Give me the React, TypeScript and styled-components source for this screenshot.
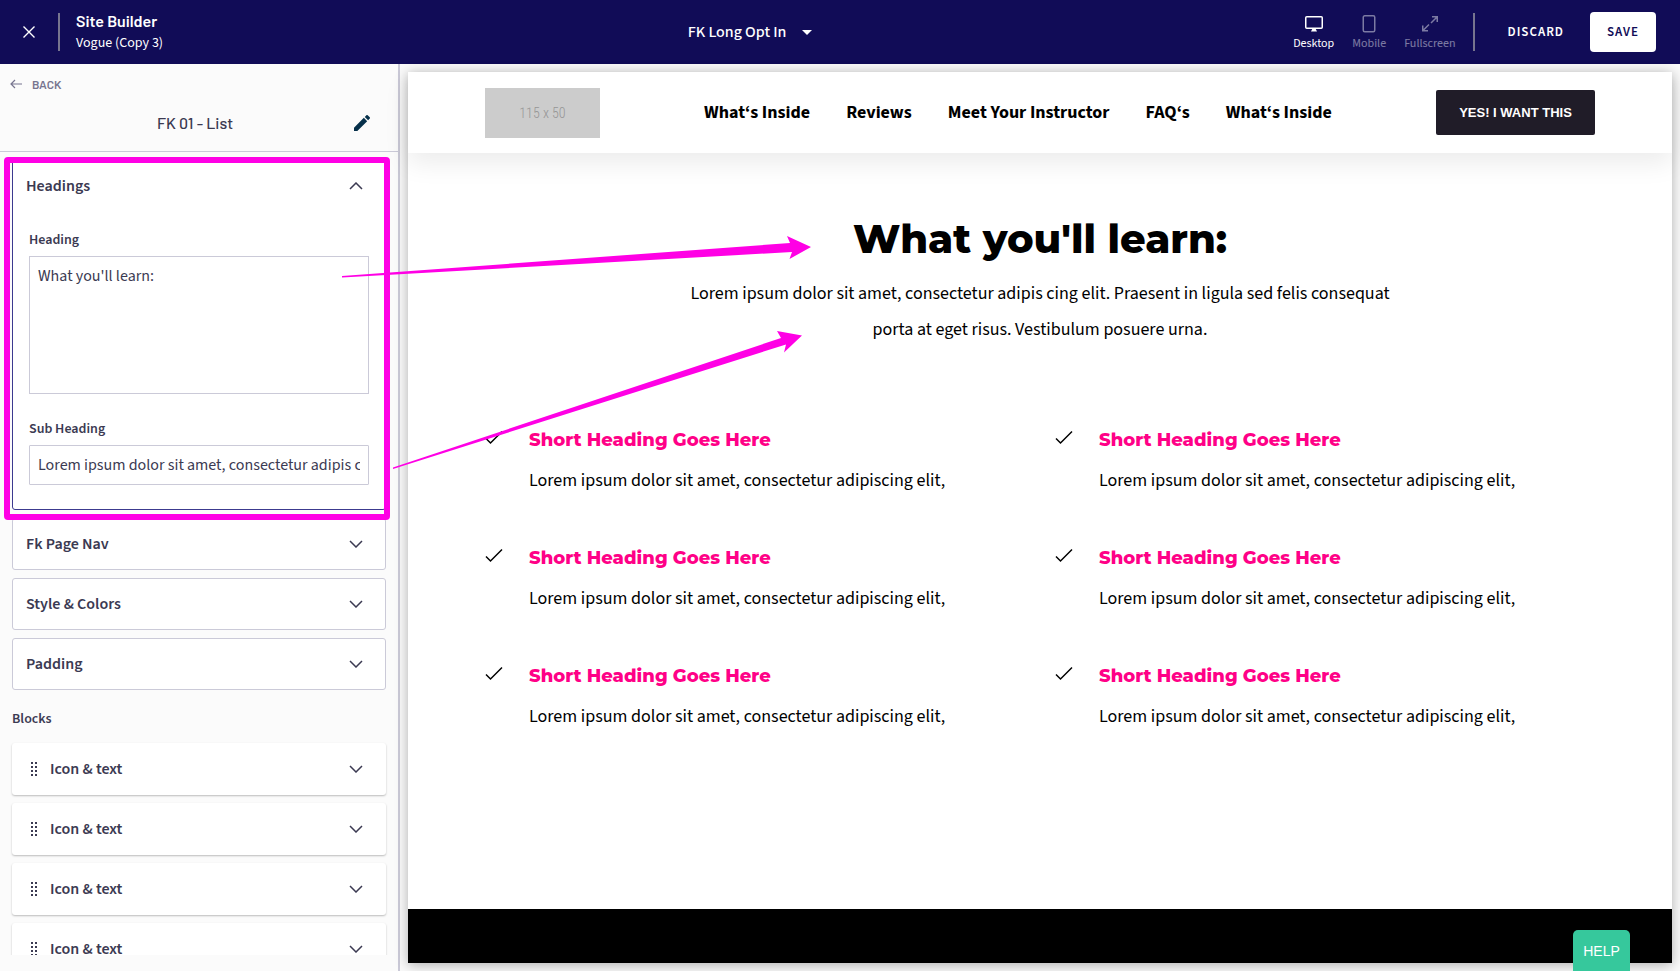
import React from "react";
import styled, { createGlobalStyle } from "styled-components";

const sans = `"Source Sans 3", "Source Sans Pro", "Noto Sans CJK SC", sans-serif`;
const display = `Barlow, Roboto, sans-serif`;
const heading = `Montserrat, Inter, sans-serif`;

const GlobalStyle = createGlobalStyle`
  *, *::before, *::after { box-sizing: border-box; }
  body { margin: 0; background: #fafafa; color: #3b3a52; font-family: ${sans}; }
  h1, h2, h3, p, ul { margin: 0; padding: 0; }
  ul { list-style: none; }
  button { font: inherit; color: inherit; background: none; border: 0; padding: 0; cursor: pointer; }
  svg { display: block; flex: none; }
`;

const Page = styled.div`
  position: relative;
  display: flex;
  flex-direction: column;
  height: 100vh;
  overflow: hidden;
`;

const TopBar = styled.header`
  display: flex;
  align-items: center;
  justify-content: space-between;
  flex: none;
  height: 64px;
  padding: 0 24px 0 20px;
  background: #110c57;
  color: #fff;
`;

const TopGroup = styled.div`
  display: flex;
  align-items: center;
  min-width: 205px;
`;

const IconButton = styled.button`
  display: flex;
  align-items: center;
  justify-content: center;
  width: 18px;
  height: 24px;
`;

const Divider = styled.span<{ $before: number }>`
  width: 2px;
  height: 38px;
  margin: 0 16px 0 ${(p) => p.$before}px;
  background: #77758f;
`;

const Brand = styled.h1`
  font: 600 16px/22px ${display};
`;

const SiteName = styled.p`
  font-size: 14px;
  line-height: 22px;
`;

const PagePicker = styled.button`
  display: flex;
  align-items: center;
  gap: 16px;
  font-size: 16px;
  font-weight: 500;
  line-height: 24px;
`;

const ViewButton = styled.button<{ $active?: boolean }>`
  display: flex;
  flex-direction: column;
  align-items: center;
  gap: 2px;
  padding-top: 2px;
  margin-left: 18px;
  font-size: 12px;
  line-height: 16px;
  opacity: ${(p) => (p.$active ? 1 : 0.45)};
`;

const Discard = styled.button`
  margin: 0 26px 0 17px;
  font-size: 13px;
  font-weight: 600;
  letter-spacing: 1px;
`;

const Save = styled(Discard)`
  width: 66px;
  height: 40px;
  margin: 0;
  border-radius: 4px;
  background: #fff;
  color: #110c57;
`;

const Workspace = styled.div`
  display: flex;
  flex: 1;
  min-height: 0;
`;

const Sidebar = styled.aside`
  display: flex;
  flex-direction: column;
  flex: none;
  width: 400px;
  padding-bottom: 16px;
  border-right: 2px solid #cbcad8;
  background: #fbfbfb;
`;

const SidebarHead = styled.div`
  flex: none;
  height: 88px;
  padding: 10px;
  border-bottom: 1px solid #cbcad8;
`;

const Back = styled.button`
  display: flex;
  align-items: center;
  gap: 10px;
  color: #77758f;
  font: 600 12px/20px ${display};
`;

const TitleRow = styled.div`
  display: flex;
  align-items: center;
  justify-content: space-between;
  padding: 17px 17px 0 147px;
`;

const Title = styled.h2`
  font: 500 16px/24px ${display};
`;

const PanelList = styled.div`
  flex: 1;
  min-height: 0;
  overflow: hidden;
  padding: 8px 12px 0;
`;

const Panel = styled.section<{ $open?: boolean }>`
  position: relative;
  z-index: ${(p) => (p.$open ? 1 : 0)};
  margin-bottom: 8px;
  border: 1px solid ${(p) => (p.$open ? "#3c3a8f" : "#cbcad8")};
  border-radius: 3px;
  background: #fff;
`;

const Block = styled(Panel)`
  border-color: transparent;
  box-shadow: 0 1px 2px rgba(0, 0, 0, 0.25);
`;

const PanelToggle = styled.button<{ $block?: boolean }>`
  display: flex;
  align-items: center;
  gap: 12px;
  width: 100%;
  height: 50px;
  padding: 0 22px 0 ${(p) => (p.$block ? 17 : 13)}px;
  font-size: 16px;
  font-weight: 600;
  line-height: 24px;
  text-align: left;
`;

const ToggleText = styled.span`
  flex: 1;
`;

const PanelBody = styled.div`
  padding: 19px 16px 24px;
`;

const Label = styled.label`
  display: block;
  margin-bottom: 6px;
  font-size: 14px;
  font-weight: 600;
  line-height: 20px;
`;

const TextArea = styled.textarea`
  display: block;
  width: 100%;
  height: 138px;
  margin-bottom: 25px;
  padding: 7px 8px;
  border: 1px solid #cbcad8;
  outline: 0;
  resize: none;
  background: #fff;
  color: #3b3a52;
  font: 400 16px/24px ${sans};
`;

const TextInput = styled.input`
  display: block;
  width: 100%;
  height: 40px;
  padding: 0 8px;
  border: 1px solid #cbcad8;
  border-radius: 1px;
  outline: 0;
  background: #fff;
  color: #3b3a52;
  font: 400 16px/24px ${sans};
`;

const Highlight = styled.span`
  position: absolute;
  inset: -4px -5px -11px -9px;
  border: 6px solid #ff00e5;
  border-radius: 4px;
  pointer-events: none;
`;

const BlocksTitle = styled.h3`
  padding: 9px 0 12px;
  font-size: 14px;
  font-weight: 600;
  line-height: 24px;
`;

const Stage = styled.main`
  display: flex;
  flex: 1;
  min-width: 0;
  padding: 8px;
  background: #fafafa;
`;

const Canvas = styled.div`
  display: flex;
  flex-direction: column;
  flex: 1;
  min-width: 0;
  background: #fff;
  box-shadow: 0 2px 12px rgba(0, 0, 0, 0.3);
`;

const SiteNav = styled.nav`
  display: flex;
  align-items: center;
  justify-content: space-between;
  height: 81px;
  padding: 0 77px;
  box-shadow: 0 10px 24px rgba(0, 0, 0, 0.08);
`;

const Logo = styled.div`
  display: flex;
  align-items: center;
  justify-content: center;
  width: 115px;
  height: 50px;
  background: #ccc;
  color: #969696;
  font: 300 14px/16px "Roboto Condensed", "Liberation Sans Narrow", "Liberation Sans", sans-serif;
`;

const Links = styled.ul`
  display: flex;
  gap: 36px;
`;

const NavLink = styled.a`
  color: #000;
  font-size: 18px;
  font-weight: 700;
  line-height: 24px;
  text-decoration: none;
`;

const Cta = styled.button`
  width: 159px;
  height: 45px;
  border-radius: 2px;
  background: #201c28;
  color: #fff;
  font: 700 13px/20px "Liberation Sans", sans-serif;
`;

const Intro = styled.section`
  display: flex;
  flex-direction: column;
  align-items: center;
  padding: 61px 77px 0;
  color: #000;
  text-align: center;
`;

const IntroTitle = styled.h2`
  font: 800 40px/50px ${heading};
`;

const IntroText = styled.p`
  max-width: 720px;
  margin-top: 12px;
  font-size: 18px;
  line-height: 36px;
`;

const Features = styled.ul`
  display: grid;
  grid-template-columns: 1fr 1fr;
  column-gap: 30px;
  padding: 77px 77px 0;
  flex: 1;
  align-content: start;
`;

const Feature = styled.li`
  display: flex;
  gap: 26px;
  height: 118px;
  color: #000;
`;

const FeatureTitle = styled.h3`
  color: #ff0087;
  font: 800 18px/30px ${heading};
`;

const FeatureText = styled.p`
  margin-top: 8px;
  font-size: 18px;
  line-height: 36px;
`;

const SiteFooter = styled.footer`
  height: 54px;
  background: #000;
`;

const Help = styled.button`
  position: absolute;
  right: 50px;
  bottom: 0;
  width: 57px;
  height: 41px;
  border-radius: 5px 5px 0 0;
  background: #36c89c;
  color: #fff;
  font: 400 14px/20px "Liberation Sans", sans-serif;
`;

const Arrows = styled.svg`
  position: absolute;
  z-index: 2;
  top: 0;
  left: 0;
  pointer-events: none;
`;

const Chevron = ({ up }: { up?: boolean }) => (
  <svg width="14" height="8" viewBox="0 0 14 8" fill="none" stroke="#3b3a52" strokeWidth="1.5">
    <path d={up ? "M1 7l6-6 6 6" : "M1 1l6 6 6-6"} />
  </svg>
);

const Grip = () => (
  <svg width="8" height="14" viewBox="0 0 8 14" fill="#3b3a52">
    {[0, 4, 8, 12].map((y) => (
      <React.Fragment key={y}>
        <rect x="1" y={y} width="2" height="2" />
        <rect x="5" y={y} width="2" height="2" />
      </React.Fragment>
    ))}
  </svg>
);

const Check = () => (
  <svg width="18" height="28" viewBox="0 0 18 28" fill="none" stroke="#000" strokeWidth="1.5">
    <path d="M1 13.500l4.500 4.500L17 6.500" />
  </svg>
);

const links = ["What‘s Inside", "Reviews", "Meet Your Instructor", "FAQ‘s", "What‘s Inside"];
const panels = ["Fk Page Nav", "Style & Colors", "Padding"];

export default function App() {
  return (
    <Page>
      <GlobalStyle />
      <TopBar>
        <TopGroup>
          <IconButton aria-label="Close">
            <svg width="12" height="12" viewBox="0 0 12 12" stroke="#fff" strokeWidth="1.4">
              <path d="M.5.5l11 11M11.500.5l-11 11" />
            </svg>
          </IconButton>
          <Divider $before={20} />
          <div>
            <Brand>Site Builder</Brand>
            <SiteName>Vogue (Copy 3)</SiteName>
          </div>
        </TopGroup>
        <PagePicker>
          FK Long Opt In
          <svg width="10" height="5" viewBox="0 0 10 5" fill="#fff">
            <path d="M0 0h10L5 5z" />
          </svg>
        </PagePicker>
        <TopGroup>
          <ViewButton $active>
            <svg width="20" height="20" viewBox="0 0 20 20" fill="none" stroke="#fff" strokeWidth="1.5">
              <rect x="1.750" y="2.750" width="16.500" height="11.500" rx="1" />
              <path d="M7 17.500l1.500-3h3l1.500 3z" fill="#fff" stroke="none" />
            </svg>
            Desktop
          </ViewButton>
          <ViewButton>
            <svg width="20" height="20" viewBox="0 0 20 20" fill="none" stroke="#fff" strokeWidth="1.500">
              <rect x="4.250" y="1.750" width="11.500" height="16" rx="1.500" />
            </svg>
            Mobile
          </ViewButton>
          <ViewButton>
            <svg width="20" height="20" viewBox="0 0 20 20" fill="none" stroke="#fff" strokeWidth="1.500">
              <path d="M12 2.750h5.250V8M17 3l-6 6M2.750 11.500v5.250H8M3 16.500l6-6" />
            </svg>
            Fullscreen
          </ViewButton>
          <Divider $before={17} />
          <Discard>DISCARD</Discard>
          <Save>SAVE</Save>
        </TopGroup>
      </TopBar>

      <Workspace>
        <Sidebar>
          <SidebarHead>
            <Back>
              <svg width="12" height="10" viewBox="0 0 12 10" fill="none" stroke="#77758f" strokeWidth="1.200">
                <path d="M5 1L1 5l4 4M1 5h11" />
              </svg>
              BACK
            </Back>
            <TitleRow>
              <Title>FK 01 - List</Title>
              <IconButton aria-label="Rename">
                <svg width="16" height="16" viewBox="3 3 18 18" fill="#06304a">
                  <path d="M3 17.250V21h3.750L17.810 9.940l-3.750-3.750L3 17.250zM20.710 7.040a1 1 0 000-1.410l-2.340-2.340a1 1 0 00-1.410 0l-1.830 1.830 3.750 3.750 1.830-1.830z" />
                </svg>
              </IconButton>
            </TitleRow>
          </SidebarHead>
          <PanelList>
            <Panel $open>
              <PanelToggle aria-expanded="true">
                <ToggleText>Headings</ToggleText>
                <Chevron up />
              </PanelToggle>
              <PanelBody>
                <Label htmlFor="heading">Heading</Label>
                <TextArea id="heading" defaultValue="What you'll learn:" />
                <Label htmlFor="sub-heading">Sub Heading</Label>
                <TextInput
                  id="sub-heading"
                  defaultValue="Lorem ipsum dolor sit amet, consectetur adipis cing elit. Praesent in ligula sed felis consequat porta at eget risus."
                />
              </PanelBody>
              <Highlight />
            </Panel>
            {panels.map((name) => (
              <Panel key={name}>
                <PanelToggle>
                  <ToggleText>{name}</ToggleText>
                  <Chevron />
                </PanelToggle>
              </Panel>
            ))}
            <BlocksTitle>Blocks</BlocksTitle>
            {[1, 2, 3, 4].map((n) => (
              <Block key={n}>
                <PanelToggle $block>
                  <Grip />
                  <ToggleText>Icon &amp; text</ToggleText>
                  <Chevron />
                </PanelToggle>
              </Block>
            ))}
          </PanelList>
        </Sidebar>

        <Stage>
          <Canvas>
            <SiteNav>
              <Logo>115 x 50</Logo>
              <Links>
                {links.map((text, i) => (
                  <li key={i}>
                    <NavLink href="#">{text}</NavLink>
                  </li>
                ))}
              </Links>
              <Cta>YES! I WANT THIS</Cta>
            </SiteNav>
            <Intro>
              <IntroTitle>What you'll learn:</IntroTitle>
              <IntroText>
                Lorem ipsum dolor sit amet, consectetur adipis cing elit. Praesent in ligula sed felis
                consequat porta at eget risus. Vestibulum posuere urna.
              </IntroText>
            </Intro>
            <Features>
              {[1, 2, 3, 4, 5, 6].map((n) => (
                <Feature key={n}>
                  <Check />
                  <div>
                    <FeatureTitle>Short Heading Goes Here</FeatureTitle>
                    <FeatureText>Lorem ipsum dolor sit amet, consectetur adipiscing elit,</FeatureText>
                  </div>
                </Feature>
              ))}
            </Features>
            <SiteFooter />
          </Canvas>
        </Stage>
      </Workspace>

      <Help>HELP</Help>
      <Arrows width="820" height="480" viewBox="0 0 820 480" fill="#ff00e5">
        <path d="M342 276L790 243l-3-7 24 11-21.500 12 2.500-7L342 277.500z" />
        <path d="M393 467.500L781 338l-4-7 25 4.500-18 17 2-8L393 469z" />
      </Arrows>
    </Page>
  );
}
